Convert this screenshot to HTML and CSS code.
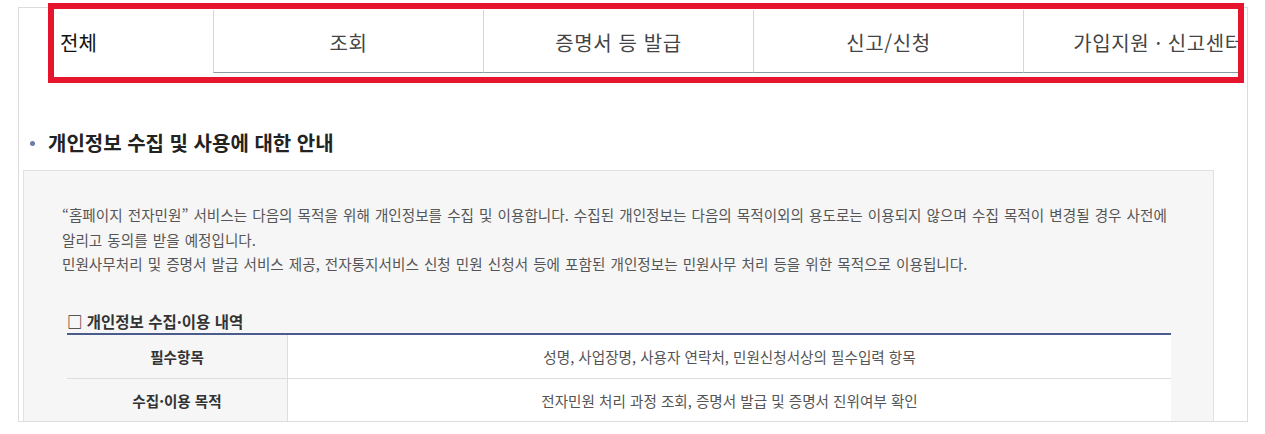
FILE: index.html
```html
<!DOCTYPE html>
<html lang="ko">
<head>
    <meta charset="UTF-8">
    <meta name="viewport" content="width=device-width, initial-scale=1.0">
    <title>개인정보 수집 및 사용에 대한 안내</title>
    <link rel="stylesheet" href="styles.css">
</head>
<body>
    <div class="frame">
        <nav class="tabs">
            <a class="tab active">전체</a>
            <a class="tab">조회</a>
            <a class="tab">증명서 등 발급</a>
            <a class="tab">신고/신청</a>
            <a class="tab">가입지원 · 신고센터</a>
        </nav>

        <h2 class="title">개인정보 수집 및 사용에 대한 안내</h2>

        <div class="notice">
            <p>“홈페이지 전자민원” 서비스는 다음의 목적을 위해 개인정보를 수집 및 이용합니다. 수집된 개인정보는 다음의 목적이외의 용도로는 이용되지 않으며 수집 목적이 변경될 경우 사전에<br>
            알리고 동의를 받을 예정입니다.<br>
            민원사무처리 및 증명서 발급 서비스 제공, 전자통지서비스 신청 민원 신청서 등에 포함된 개인정보는 민원사무 처리 등을 위한 목적으로 이용됩니다.</p>

            <h3 class="sub">□ 개인정보 수집·이용 내역</h3>
            <table class="info">
                <tr>
                    <th>필수항목</th>
                    <td>성명, 사업장명, 사용자 연락처, 민원신청서상의 필수입력 항목</td>
                </tr>
                <tr>
                    <th>수집·이용 목적</th>
                    <td>전자민원 처리 과정 조회, 증명서 발급 및 증명서 진위여부 확인</td>
                </tr>
            </table>
        </div>
    </div>

    <!-- highlight box drawn over the tab bar -->
    <div class="highlight"></div>
</body>
</html>
```

FILE: styles.css
```css
body {
    margin: 0;
    background: #fff;
    font-family: "Noto Sans CJK KR", "Noto Sans", sans-serif;
    color: #444;
    position: relative;
}
.frame {
    box-sizing: border-box;
    width: 1230px;
    height: 415px;
    margin: 7px 0 0 18px;
    border: 1px solid #dcdcdc;
    overflow: hidden;
}
.tabs {
    display: flex;
    width: 1184px;
    margin: 2px 0 0 35px;
    overflow: hidden;
}
.tab {
    flex: 0 0 270px;
    box-sizing: border-box;
    height: 63px;
    padding-top: 2px;
    display: flex;
    align-items: center;
    justify-content: center;
    border-left: 1px solid #d6d6d6;
    border-bottom: 1px solid #8c9b9b;
    font-size: 20px;
    letter-spacing: 0.6px;
    color: #444;
    white-space: nowrap;
}
.tab.active {
    flex: 0 0 159px;
    justify-content: flex-start;
    padding-left: 6px;
    border: none;
    color: #111;
    letter-spacing: 0;
}
.title {
    display: flex;
    align-items: center;
    margin: 57px 0 0 11px;
    font-size: 20px;
    line-height: 26px;
    font-weight: 700;
    color: #222;
}
.title::before {
    content: "";
    width: 5px;
    height: 5px;
    border-radius: 50%;
    background: #6a7dab;
    margin-right: 13px;
}
.notice {
    box-sizing: border-box;
    width: 1191px;
    margin: 14px 0 0 4px;
    padding: 32px 42px 0 38px;
    height: 400px;
    background: #f6f6f6;
    border: 1px solid #e2e2e2;
}
.notice p {
    margin: 0;
    font-size: 14.6px;
    line-height: 24.5px;
    word-spacing: 1px;
    color: #555;
    white-space: nowrap;
}
.sub {
    margin: 34px 0 0 5px;
    font-size: 15.5px;
    line-height: 20px;
    font-weight: 700;
    color: #333;
}
.info {
    width: calc(100% - 5px);
    margin: 2px 0 0 5px;
    border-collapse: collapse;
    border-top: 2px solid #4b5c8c;
    font-size: 14.6px;
}
.info th,
.info td {
    height: 43px;
    padding: 0;
    border-bottom: 1px solid #dedede;
    text-align: center;
}
.info th {
    width: 220px;
    background: #f6f6f6;
    border-right: 1px solid #dedede;
    color: #333;
    font-weight: 700;
}
.info td {
    background: #fff;
    color: #555;
}
.highlight {
    position: absolute;
    left: 48px;
    top: 3px;
    width: 1196px;
    height: 80px;
    box-sizing: border-box;
    border: 6px solid #e6142c;
}
```
